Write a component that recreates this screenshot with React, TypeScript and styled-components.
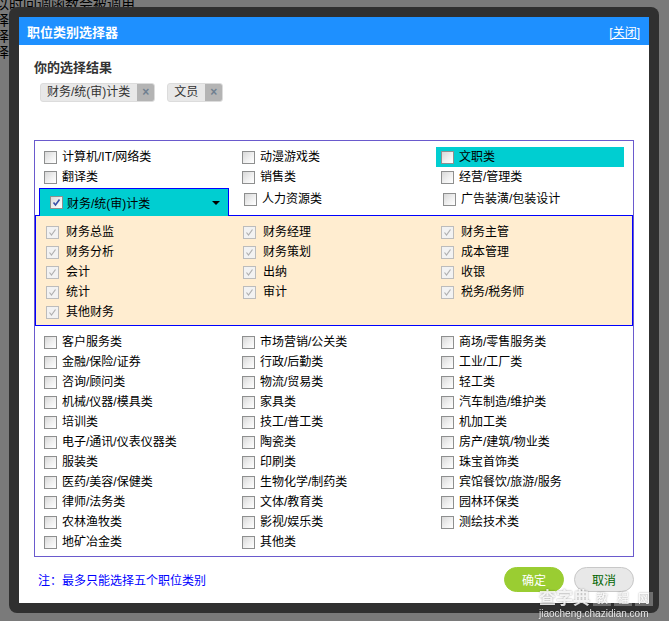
import React from "react";
import styled, { createGlobalStyle, css } from "styled-components";

const GlobalStyle = createGlobalStyle`
  html, body {
    margin: 0;
    padding: 0;
    background: #fff;
    font-family: "Liberation Sans", "Noto Sans CJK SC", sans-serif;
    font-size: 12px;
  }
`;

const PageText = styled.div`
  margin: -4px 0 0 -5px;
  font-size: 14px;
  line-height: 16px;
  color: #000;
  white-space: nowrap;
`;

const Overlay = styled.div`
  position: fixed;
  inset: 0;
  background: rgba(0, 0, 0, 0.52);
`;

const Frame = styled.div`
  position: fixed;
  left: 9px;
  top: 7px;
  width: 650px;
  height: 606px;
  box-sizing: border-box;
  padding: 10px;
  background: #303030;
  border-radius: 8px;
`;

const Dialog = styled.div`
  height: 100%;
  background: #fff;
  display: flex;
  flex-direction: column;
`;

const Header = styled.div`
  height: 28px;
  flex: none;
  background: #1e90ff;
  display: flex;
  align-items: center;
  justify-content: space-between;
  padding: 0 9px 0 8px;
  color: #fff;
`;

const Title = styled.span`
  font-weight: bold;
  font-size: 13px;
`;

const Close = styled.a`
  color: #fff;
  font-size: 12px;
  text-decoration: underline;
  cursor: pointer;
`;

const Body = styled.div`
  padding: 16px 15px 0 15px;
  display: flex;
  flex-direction: column;
`;

const SectionTitle = styled.div`
  font-weight: bold;
  font-size: 13px;
  line-height: 14px;
  color: #333;
`;

const Tags = styled.div`
  display: flex;
  gap: 12px;
  margin: 8px 0 0 6px;
  height: 19px;
`;

const Tag = styled.span`
  display: inline-flex;
  align-items: stretch;
  height: 19px;
  box-sizing: border-box;
  border: 1px solid #dcdcdc;
  border-radius: 3px;
  background: #e8e8e8;
  overflow: hidden;
`;

const TagText = styled.span`
  padding: 0 7px 0 6px;
  font-size: 12px;
  line-height: 17px;
  color: #333;
`;

const TagX = styled.span`
  width: 17px;
  background: #b4b4b4;
  color: #6f7f90;
  font-weight: bold;
  font-size: 12px;
  line-height: 17px;
  text-align: center;
`;

const Box = styled.div`
  margin-top: 38px;
  width: 600px;
  box-sizing: border-box;
  border: 1px solid #6a5acd;
  padding: 6px 0 4px 0;
`;

const Grid = styled.div<{ $cols: string; $pad: number }>`
  display: grid;
  grid-template-columns: ${(p) => p.$cols};
  grid-auto-rows: 20px;
  padding-left: ${(p) => p.$pad}px;
`;

const Item = styled.label<{ $hl?: boolean; $shift?: boolean; $gap?: number }>`
  display: flex;
  align-items: center;
  gap: ${(p) => p.$gap ?? 5}px;
  height: 20px;
  font-size: 12px;
  line-height: 14px;
  color: #000;
  white-space: nowrap;
  ${(p) =>
    p.$hl &&
    css`
      background: #00ced1;
      margin-left: -5px;
      padding-left: 5px;
      width: 183px;
    `}
  ${(p) =>
    p.$shift &&
    css`
      margin: 1px 0 0 2px;
    `}
`;

const Box13 = styled.span<{ $dis?: boolean }>`
  flex: none;
  width: 13px;
  height: 13px;
  box-sizing: border-box;
  display: inline-flex;
  align-items: center;
  justify-content: center;
  border: 1px solid ${(p) => (p.$dis ? "#bcbcbc" : "#8e8f8f")};
  background: ${(p) =>
    p.$dis
      ? "#f2f2f2"
      : "linear-gradient(135deg, #d8d8d8 0%, #f0f0f0 55%, #ffffff 100%)"};
`;

function Check({ on, dis }: { on?: boolean; dis?: boolean }) {
  return (
    <Box13 $dis={dis}>
      {on && (
        <svg width="9" height="9" viewBox="0 0 9 9">
          <path
            d="M1.5 4.5 L3.5 7 L7.5 1.5"
            fill="none"
            stroke={dis ? "#b0b0b0" : "#3a4fa8"}
            strokeWidth={dis ? 1.2 : 1.6}
          />
        </svg>
      )}
    </Box13>
  );
}

const Row3 = styled.div`
  display: grid;
  grid-template-columns: 198px 199px 1fr;
  padding: 1px 0 0 9px;
  align-items: start;
`;

const Tab = styled.div`
  position: relative;
  z-index: 1;
  margin: 0 0 -1px -5px;
  width: 190px;
  height: 28px;
  box-sizing: border-box;
  border: 1px solid #0000ff;
  border-bottom: none;
  background: #00ced1;
  display: flex;
  align-items: center;
  padding: 0 8px 0 10px;
  gap: 4px;
  font-size: 12px;
`;

const TabLabel = styled.span`
  flex: 1;
`;

const Caret = styled.span`
  width: 0;
  height: 0;
  border-left: 4px solid transparent;
  border-right: 4px solid transparent;
  border-top: 4px solid #000;
`;

const SubPanel = styled.div`
  position: relative;
  border: 1px solid #0000ff;
  background: #ffedd0;
  padding: 6px 0 3px 10px;
`;

const Lower = styled.div`
  margin-top: 6px;
`;

const Footer = styled.div`
  margin-top: 10px;
  width: 600px;
  display: flex;
  align-items: center;
`;

const Note = styled.span`
  flex: 1;
  padding-left: 4px;
  color: #0000ff;
  font-size: 12px;
`;

const Btn = styled.button<{ $primary?: boolean }>`
  width: 60px;
  height: 25px;
  margin-left: 10px;
  border-radius: 13px;
  font-family: inherit;
  font-size: 12px;
  cursor: pointer;
  ${(p) =>
    p.$primary
      ? css`
          background: #9acd32;
          border: 1px solid #9acd32;
          color: #fff;
        `
      : css`
          background: #e8e8e8;
          border: 1px solid #c8c8c8;
          color: #006400;
        `}
`;

const Watermark = styled.div`
  position: fixed;
  right: 16px;
  bottom: 2px;
  color: rgba(255, 255, 255, 0.85);
  text-shadow: 0 0 2px rgba(0, 0, 0, 0.4);
  display: flex;
  flex-direction: column;
  align-items: flex-start;
  line-height: 1;
`;

const WmTop = styled.div`
  display: flex;
  align-items: center;
  gap: 3px;
`;

const WmBig = styled.span`
  font-size: 17px;
  font-weight: bold;
`;

const WmBox = styled.span`
  font-size: 12px;
  padding: 1px 3px;
  background: rgba(255, 255, 255, 0.3);
  color: rgba(255, 255, 255, 0.95);
`;

const WmUrl = styled.span`
  font-size: 10px;
  margin-top: 2px;
`;

const topRows = [
  ["计算机/IT/网络类", "动漫游戏类", "文职类"],
  ["翻译类", "销售类", "经营/管理类"],
];

const subItems = [
  "财务总监", "财务经理", "财务主管",
  "财务分析", "财务策划", "成本管理",
  "会计", "出纳", "收银",
  "统计", "审计", "税务/税务师",
  "其他财务",
];

const lowerItems = [
  "客户服务类", "市场营销/公关类", "商场/零售服务类",
  "金融/保险/证券", "行政/后勤类", "工业/工厂类",
  "咨询/顾问类", "物流/贸易类", "轻工类",
  "机械/仪器/模具类", "家具类", "汽车制造/维护类",
  "培训类", "技工/普工类", "机加工类",
  "电子/通讯/仪表仪器类", "陶瓷类", "房产/建筑/物业类",
  "服装类", "印刷类", "珠宝首饰类",
  "医药/美容/保健类", "生物化学/制药类", "宾馆餐饮/旅游/服务",
  "律师/法务类", "文体/教育类", "园林环保类",
  "农林渔牧类", "影视/娱乐类", "测绘技术类",
  "地矿冶金类", "其他类",
];

export default function App() {
  return (
    <>
      <GlobalStyle />
      <PageText>
        <div>以时回调函数会被调用</div>
        <div>择了选择了</div>
        <div>择了选择了</div>
        <div>择了选择了</div>
      </PageText>
      <Overlay />
      <Frame>
        <Dialog>
          <Header>
            <Title>职位类别选择器</Title>
            <Close>[关闭]</Close>
          </Header>
          <Body>
            <SectionTitle>你的选择结果</SectionTitle>
            <Tags>
              <Tag>
                <TagText>财务/统(审)计类</TagText>
                <TagX>×</TagX>
              </Tag>
              <Tag>
                <TagText>文员</TagText>
                <TagX>×</TagX>
              </Tag>
            </Tags>
            <Box>
              <Grid $cols="198px 199px 1fr" $pad={9}>
                {topRows.flat().map((t) => (
                  <Item key={t} $hl={t === "文职类"}>
                    <Check />
                    {t}
                  </Item>
                ))}
              </Grid>
              <Row3>
                <Tab>
                  <Check on />
                  <TabLabel>财务/统(审)计类</TabLabel>
                  <Caret />
                </Tab>
                <Item $shift>
                  <Check />
                  人力资源类
                </Item>
                <Item $shift>
                  <Check />
                  广告装潢/包装设计
                </Item>
              </Row3>
              <SubPanel>
                <Grid $cols="197px 198px 1fr" $pad={0}>
                  {subItems.map((t) => (
                    <Item key={t} $gap={7}>
                      <Check on dis />
                      {t}
                    </Item>
                  ))}
                </Grid>
              </SubPanel>
              <Lower>
                <Grid $cols="198px 199px 1fr" $pad={9}>
                  {lowerItems.map((t) => (
                    <Item key={t}>
                      <Check />
                      {t}
                    </Item>
                  ))}
                </Grid>
              </Lower>
            </Box>
            <Footer>
              <Note>注：最多只能选择五个职位类别</Note>
              <Btn $primary>确定</Btn>
              <Btn>取消</Btn>
            </Footer>
          </Body>
        </Dialog>
      </Frame>
      <Watermark>
        <WmTop>
          <WmBig>查字典</WmBig>
          <WmBox>教</WmBox>
          <WmBox>程</WmBox>
          <WmBox>网</WmBox>
        </WmTop>
        <WmUrl>jiaocheng.chazidian.com</WmUrl>
      </Watermark>
    </>
  );
}
